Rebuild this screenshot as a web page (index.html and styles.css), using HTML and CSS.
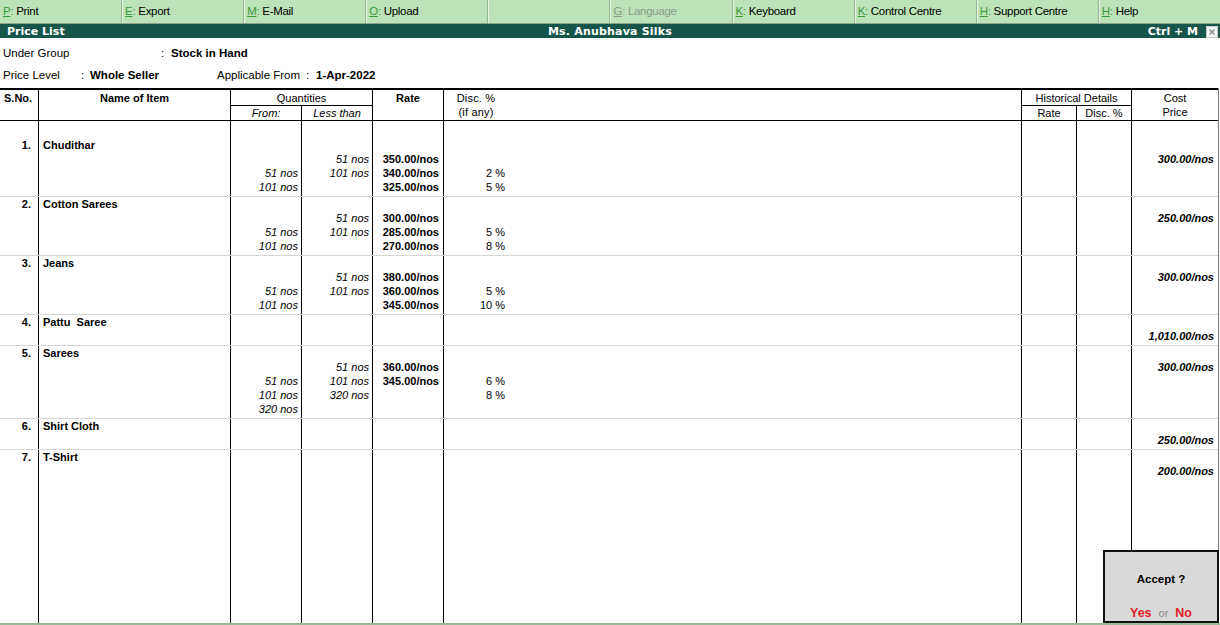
FILE: index.html
```html
<!DOCTYPE html>
<html>
<head>
<meta charset="utf-8">
<title>Price List</title>
<link rel="stylesheet" href="styles.css">
</head>
<body>
<div class="app">
  <div class="toolbar">
    <div class="tb"><span class="key"><u>P</u>:</span> Print</div>
    <div class="tb"><span class="key"><u>E</u>:</span> Export</div>
    <div class="tb"><span class="key"><u>M</u>:</span> E-Mail</div>
    <div class="tb"><span class="key"><u>O</u>:</span> Upload</div>
    <div class="tb"></div>
    <div class="tb dim"><span><u>G</u>:</span> Language</div>
    <div class="tb"><span class="key"><u>K</u>:</span> Keyboard</div>
    <div class="tb"><span class="key"><u>K</u>:</span> Control Centre</div>
    <div class="tb"><span class="key"><u>H</u>:</span> Support Centre</div>
    <div class="tb"><span class="key"><u>H</u>:</span> Help</div>
  </div>
  <div class="titlebar">
    <div class="tl">Price List</div>
    <div class="tc">Ms. Anubhava Silks</div>
    <div class="tr">Ctrl + M
      <svg class="close" width="12" height="12" viewBox="0 0 12 12"><rect x="0.5" y="0.5" width="11" height="11" fill="#f2f2f2" stroke="#cfcfcf"/><path d="M3.5 3.5 L8.5 8.5 M8.5 3.5 L3.5 8.5" stroke="#8c8c8c" stroke-width="1.4"/></svg>
    </div>
  </div>
  <div class="content">
    <div class="info">
      <div class="iline">
        <span class="lbl1">Under Group</span><span class="col1">:</span><b>Stock in Hand</b>
      </div>
      <div class="iline">
        <span class="lbl2">Price Level</span><span class="col2">:</span><b class="val2">Whole Seller</b><span class="lbl3">Applicable From</span><span class="col3">:</span><b>1-Apr-2022</b>
      </div>
    </div>
    <div class="table">
      <div class="head">
        <div class="h sno">S.No.</div>
        <div class="h name">Name of Item</div>
        <div class="h qty">Quantities</div>
        <div class="h from">From:</div>
        <div class="h less">Less than</div>
        <div class="h rate">Rate</div>
        <div class="h disc">Disc. %<br>(if any)</div>
        <div class="h blank"></div>
        <div class="h hist">Historical Details</div>
        <div class="h hr">Rate</div>
        <div class="h hd">Disc. %</div>
        <div class="h cost">Cost<br>Price</div>
      </div>
      <div class="body">
        <div class="row spacer">
          <div class="c sno"></div><div class="c name"></div><div class="c from"></div><div class="c less"></div><div class="c rate"></div><div class="c disc"></div><div class="c blank"></div><div class="c hr"></div><div class="c hd"></div><div class="c cost"></div>
        </div>
        <div class="row">
          <div class="c sno">1.</div>
          <div class="c name">Chudithar</div>
          <div class="c from"><br><br>51 nos<br>101 nos</div>
          <div class="c less"><br>51 nos<br>101 nos</div>
          <div class="c rate"><br>350.00/nos<br>340.00/nos<br>325.00/nos</div>
          <div class="c disc"><br><br>2 %<br>5 %</div>
          <div class="c blank"></div><div class="c hr"></div><div class="c hd"></div>
          <div class="c cost"><br>300.00/nos</div>
        </div>
        <div class="row">
          <div class="c sno">2.</div>
          <div class="c name">Cotton Sarees</div>
          <div class="c from"><br><br>51 nos<br>101 nos</div>
          <div class="c less"><br>51 nos<br>101 nos</div>
          <div class="c rate"><br>300.00/nos<br>285.00/nos<br>270.00/nos</div>
          <div class="c disc"><br><br>5 %<br>8 %</div>
          <div class="c blank"></div><div class="c hr"></div><div class="c hd"></div>
          <div class="c cost"><br>250.00/nos</div>
        </div>
        <div class="row">
          <div class="c sno">3.</div>
          <div class="c name">Jeans</div>
          <div class="c from"><br><br>51 nos<br>101 nos</div>
          <div class="c less"><br>51 nos<br>101 nos</div>
          <div class="c rate"><br>380.00/nos<br>360.00/nos<br>345.00/nos</div>
          <div class="c disc"><br><br>5 %<br>10 %</div>
          <div class="c blank"></div><div class="c hr"></div><div class="c hd"></div>
          <div class="c cost"><br>300.00/nos</div>
        </div>
        <div class="row">
          <div class="c sno">4.</div>
          <div class="c name">Pattu&nbsp; Saree</div>
          <div class="c from"></div>
          <div class="c less"></div>
          <div class="c rate"></div>
          <div class="c disc"></div>
          <div class="c blank"></div><div class="c hr"></div><div class="c hd"></div>
          <div class="c cost"><br>1,010.00/nos</div>
        </div>
        <div class="row">
          <div class="c sno">5.</div>
          <div class="c name">Sarees</div>
          <div class="c from"><br><br>51 nos<br>101 nos<br>320 nos</div>
          <div class="c less"><br>51 nos<br>101 nos<br>320 nos</div>
          <div class="c rate"><br>360.00/nos<br>345.00/nos</div>
          <div class="c disc"><br><br>6 %<br>8 %</div>
          <div class="c blank"></div><div class="c hr"></div><div class="c hd"></div>
          <div class="c cost"><br>300.00/nos</div>
        </div>
        <div class="row">
          <div class="c sno">6.</div>
          <div class="c name">Shirt Cloth</div>
          <div class="c from"></div>
          <div class="c less"></div>
          <div class="c rate"></div>
          <div class="c disc"></div>
          <div class="c blank"></div><div class="c hr"></div><div class="c hd"></div>
          <div class="c cost"><br>250.00/nos</div>
        </div>
        <div class="row last">
          <div class="c sno">7.</div>
          <div class="c name">T-Shirt</div>
          <div class="c from"></div>
          <div class="c less"></div>
          <div class="c rate"></div>
          <div class="c disc"></div>
          <div class="c blank"></div><div class="c hr"></div><div class="c hd"></div>
          <div class="c cost"><br>200.00/nos</div>
        </div>
        <div class="row filler">
          <div class="c sno"></div><div class="c name"></div><div class="c from"></div><div class="c less"></div><div class="c rate"></div><div class="c disc"></div><div class="c blank"></div><div class="c hr"></div><div class="c hd"></div><div class="c cost"></div>
        </div>
      </div>
    </div>
    <div class="accept">
      <div class="q">Accept ?</div>
      <div class="yn"><span class="red">Yes</span><span class="or">or</span><span class="red">No</span></div>
    </div>
  </div>
</div>
</body>
</html>
```

FILE: styles.css
```css
* { box-sizing: border-box; margin: 0; padding: 0; }
html, body { width: 1220px; height: 625px; overflow: hidden; background: #fff; }
body { font-family: "Liberation Sans", Arial, sans-serif; font-size: 11px; color: #000; }

.app { display: flex; flex-direction: column; width: 1220px; height: 625px; }

/* top button bar */
.toolbar { flex: none; display: flex; height: 24px; background: #bde2b9; border-bottom: 1px solid #8fa38d; }
.tb { flex: 1; padding-left: 3px; line-height: 23px; font-size: 11.5px; letter-spacing: -0.3px; white-space: nowrap; border-left: 1px solid #97b694; box-shadow: inset 1px 0 #e6f3e4; }
.tb:first-child { border-left: 0; box-shadow: none; }
.key { color: #3a9a3a; }
.tb.dim { color: #8c9a8b; }

/* title bar */
.titlebar { flex: none; display: grid; grid-template-columns: 1fr auto 1fr; height: 14px; background: #16554a; color: #fff; font-family: "DejaVu Sans", Verdana, sans-serif; font-weight: bold; font-size: 11px; line-height: 15px; }
.tl { padding-left: 7px; }
.tc { letter-spacing: 0.2px; }
.tr { justify-self: end; display: flex; align-items: center; gap: 8px; padding-right: 2px; }
.close { display: block; }

/* content */
.content { flex: 1; position: relative; display: flex; flex-direction: column; border-bottom: 2px solid #9bb99a; }

.info { flex: none; height: 50px; padding: 8px 0 0 3px; font-size: 11.5px; }
.iline { display: flex; line-height: 14px; white-space: nowrap; }
.iline + .iline { margin-top: 8px; }
.lbl1 { width: 158px; }
.col1 { width: 10px; }
.lbl2 { width: 78px; }
.col2 { width: 9px; }
.val2 { width: 127px; }
.lbl3 { width: 89px; }
.col3 { width: 10px; }

/* table */
.table { flex: 1; width: 1219px; display: flex; flex-direction: column; border-right: 1px solid #7a7a7a; }

.head, .row { display: grid; grid-template-columns: 38px 192px 71px 71px 71px 65px 1fr 55px 55px 87px; }

.head { flex: none; grid-template-rows: 16px 14px; border-top: 2px solid #000; border-bottom: 1px solid #000; line-height: 14px; }
.h { padding-top: 1px; text-align: center; white-space: nowrap; }
.h.sno { grid-column: 1; grid-row: 1 / 3; text-align: left; padding-left: 4px; font-weight: bold; }
.h.name { grid-column: 2; grid-row: 1 / 3; font-weight: bold; border-left: 1px solid #000; }
.h.qty { grid-column: 3 / 5; grid-row: 1; border-left: 1px solid #000; border-bottom: 1px solid #000; }
.h.from { grid-column: 3; grid-row: 2; font-style: italic; border-left: 1px solid #000; padding-top: 0; }
.h.less { grid-column: 4; grid-row: 2; font-style: italic; border-left: 1px solid #000; padding-top: 0; }
.h.rate { grid-column: 5; grid-row: 1 / 3; font-weight: bold; border-left: 1px solid #000; }
.h.disc { grid-column: 6; grid-row: 1 / 3; border-left: 1px solid #000; letter-spacing: 0.2px; }
.h.blank { grid-column: 7; grid-row: 1 / 3; }
.h.hist { grid-column: 8 / 10; grid-row: 1; border-left: 1px solid #000; border-bottom: 1px solid #000; }
.h.hr { grid-column: 8; grid-row: 2; border-left: 1px solid #000; padding-top: 0; }
.h.hd { grid-column: 9; grid-row: 2; border-left: 1px solid #000; padding-top: 0; }
.h.cost { grid-column: 10; grid-row: 1 / 3; border-left: 1px solid #000; }

.body { flex: 1; display: flex; flex-direction: column; }
.row { flex: none; border-bottom: 1px solid #d6d6d6; }
.row.spacer { height: 17px; border-bottom: 0; }
.row.last { border-bottom: 0; }
.row.filler { flex: 1; border-bottom: 0; }

.c { line-height: 14px; padding-bottom: 2px; white-space: nowrap; }
.c.sno { text-align: right; padding-right: 7px; font-weight: bold; }
.c.name { padding-left: 4px; font-weight: bold; border-left: 1px solid #000; }
.c.from, .c.less { text-align: right; padding-right: 3px; font-style: italic; border-left: 1px solid #000; }
.c.rate { text-align: right; padding-right: 4px; font-weight: bold; border-left: 1px solid #000; }
.c.disc { text-align: right; padding-right: 3px; border-left: 1px solid #000; }
.c.hr, .c.hd { border-left: 1px solid #000; }
.c.cost { text-align: right; padding-right: 4px; font-weight: bold; font-style: italic; border-left: 1px solid #000; }

/* accept box */
.accept { position: absolute; right: 1px; bottom: 0; width: 116px; height: 73px; background: #d9d9d9; border: 2px solid #111; display: flex; flex-direction: column; align-items: center; }
.q { margin-top: 20px; font-weight: bold; font-size: 11.5px; line-height: 14px; }
.yn { margin-top: 20px; font-size: 12.5px; line-height: 14px; display: flex; align-items: baseline; }
.red { color: #e32027; font-weight: bold; }
.or { color: #8a8a8a; font-size: 11px; margin: 0 7px; }
```
